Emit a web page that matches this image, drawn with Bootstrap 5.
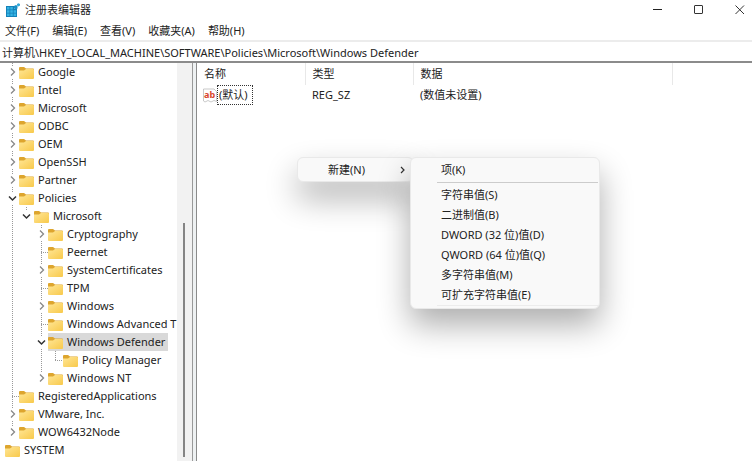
<!DOCTYPE html>
<html lang="zh-CN">
<head>
<meta charset="utf-8">
<meta name="viewport" content="width=device-width, initial-scale=1">
<title>注册表编辑器</title>
<link href="https://cdn.jsdelivr.net/npm/bootstrap@5.3.0/dist/css/bootstrap.min.css" rel="stylesheet">
<style>
body{font:11px/18px "Noto Sans","Noto Sans CJK SC",sans-serif;color:#222;background:#fff}
button{font:inherit;color:inherit}
.titlebar{height:20px;padding:0 7px 0 5px}
.titlebar h1{font:inherit;margin:0 0 0 5px}
.winbtns{gap:31px}
.winbtns button{width:10px;height:20px}
.menus{height:22px;gap:13px;padding:2px 0 0 5px;border-bottom:2px solid #ececec}
.addr{height:21px;padding:0 2px;outline:0;border-bottom:2px solid #8b8b8b !important;line-height:18px;color:#222}
.treepane{width:177px}
.tree li{height:18px}
.tree .cell{width:14px}
.tree .wide{width:15px}
.pad{width:5px}
.cell{background-repeat:no-repeat;height:18px}
.vline,.half,.tee,.elbow{background-image:repeating-linear-gradient(#999 0 1px,transparent 1px 2px),repeating-linear-gradient(90deg,#999 0 1px,transparent 1px 2px);background-position:7px 0,7px 9px}
.vline{background-size:1px 18px,0 0}
.half{background-size:1px 9px,0 0}
.tee{background-size:1px 18px,7px 1px}
.elbow{background-size:1px 9px,7px 1px}
.cell button{height:12px;width:11px;background:#fff}
.cell svg{display:block}
.node{height:18px;padding-right:3px;gap:4px}
.node.selected{background:#d9d9d9}
.scroll{width:15px;background:#f2f2f2;padding-top:160px}
.scroll i{width:2px;background:#858585;height:234px;margin-left:6px}
.split{width:5px;border-left:1px solid #999;border-right:1px solid #8b8b8b;background:#eef1f2}
.values{table-layout:fixed}
.values th{font-weight:400;height:22px;padding:0 0 0 7px;border-right:1px solid #e8e8e8}
.values th:last-child{border:0}
.values td{height:20px;padding:0 0 0 7px}
.values td:first-child{padding-left:6px}
.c1,.c2{width:108px}.c3{width:259px}
.focusbox{border:1px dotted #333;padding:0 4px 0 1px}
.popup{background:#f9f9f9;border:1px solid #e9e9e9;border-radius:6px;box-shadow:0 16px 32px rgba(0,0,0,.32)}
.popup button{text-align:left}
.pop-new{left:297px;top:157px;width:117px}
.pop-new button{height:23px;padding:0 5px 0 30px}
.pop-sub{left:410px;top:157px;width:190px}
.pop-sub button{height:20px;padding:0 30px}
.pop-sub li:first-child button{height:24px}
.pop-sub hr{margin:0 1px 2px 26px;border-top:1px solid #ccc;opacity:1}
.pop-sub .fade-rule{margin:0 1px 2px 26px;border-top:1px solid #ececec}
</style>
<script src="https://cdn.jsdelivr.net/npm/bootstrap@5.3.0/dist/js/bootstrap.bundle.min.js"></script>
</head>
<body class="vh-100 d-flex flex-column overflow-hidden position-relative">
<svg width="0" height="0" class="position-absolute" aria-hidden="true">
<linearGradient id="fg" x1="0" y1="0" x2="1" y2="1"><stop stop-color="#ffe695"/><stop offset="1" stop-color="#f8c94b"/></linearGradient>
<symbol id="folder" viewBox="0 0 15 13"><path d="M0 2Q0 1 1 1H5L7 2.500H14Q15 2.500 15 3.500V6H0z" fill="#dda52e"/><path d="M0 4.500H5L7 3H14Q15 3 15 4V12Q15 13 14 13H1Q0 13 0 12z" fill="url(#fg)"/></symbol>
<symbol id="right" viewBox="0 0 11 10"><path d="M4 1.500L7.500 5L4 8.500" fill="none" stroke="#888" stroke-width="1.300"/></symbol>
<symbol id="down" viewBox="0 0 11 10"><path d="M2 3.500L5.500 7L9 3.500" fill="none" stroke="#333" stroke-width="1.500"/></symbol>
</svg>
<header class="titlebar d-flex align-items-center flex-shrink-0">
<svg width="15" height="15" viewBox="0 0 15 15" aria-hidden="true"><path d="M1 3H9V6H12V14H1z" fill="#1581b8"/><path d="M2 4h2.500v2.500H2zM5.300 4h2.500v2.500H5.300zM2 7.300h2.500v2.500H2zM5.300 7.300h2.500v2.500H5.300zM8.600 7.300h2.500v2.500H8.600zM2 10.600h2.500V13H2zM5.300 10.600h2.500V13H5.300zM8.600 10.600h2.500V13H8.600z" fill="#35b3e3"/><path d="M9 3L11 2L12.500 3V5.500L11 6.500L9 5.500z" fill="#1a8fc6"/><path d="M12 1l1.500-.8 1.500.8v1.600l-1.500.8-1.500-.8z" fill="#35a9d8"/></svg>
<h1>注册表编辑器</h1>
<div class="winbtns d-flex ms-auto">
<button class="border-0 bg-transparent p-0 d-flex align-items-center justify-content-center" aria-label="最小化"><svg width="10" height="10"><path d="M0 4.500H9" stroke="#222"/></svg></button>
<button class="border-0 bg-transparent p-0 d-flex align-items-center justify-content-center" aria-label="最大化"><svg width="10" height="10"><rect x=".5" y=".5" width="8" height="8" rx=".5" fill="none" stroke="#333"/></svg></button>
<button class="border-0 bg-transparent p-0 d-flex align-items-center justify-content-center" aria-label="关闭"><svg width="10" height="10"><path d="M.5.5L9 9M9 .5L.5 9" stroke="#333"/></svg></button>
</div>
</header>
<nav class="menus d-flex align-items-center flex-shrink-0">
<button class="border-0 bg-transparent p-0">文件(F)</button><button class="border-0 bg-transparent p-0">编辑(E)</button><button class="border-0 bg-transparent p-0">查看(V)</button><button class="border-0 bg-transparent p-0">收藏夹(A)</button><button class="border-0 bg-transparent p-0">帮助(H)</button>
</nav>
<input class="addr w-100 border-0 flex-shrink-0" aria-label="地址" value="计算机\HKEY_LOCAL_MACHINE\SOFTWARE\Policies\Microsoft\Windows Defender">
<main class="d-flex flex-grow-1 overflow-hidden">
<nav class="treepane overflow-hidden flex-shrink-0 text-nowrap" aria-label="注册表项">
<ul class="tree list-unstyled m-0" id="tree"></ul>
</nav>
<div class="scroll flex-shrink-0"><i class="d-block"></i></div>
<div class="split flex-shrink-0"></div>
<section class="flex-grow-1">
<table class="values w-100">
<colgroup><col class="c1"><col class="c2"><col class="c3"><col></colgroup>
<thead><tr><th>名称</th><th>类型</th><th>数据</th><th></th></tr></thead>
<tbody><tr><td><span class="d-flex align-items-center"><svg width="14" height="15" viewBox="0 0 14 15" aria-hidden="true"><path d="M.5 1H11L13.500 3.500V13.500L11 12.500L8 14L5 12.500L2 14L.5 13z" fill="#fff" stroke="#bbb" stroke-width=".8"/><text x="1" y="10" font-size="9" font-weight="700" fill="#d8452c">ab</text></svg><span class="focusbox">(默认)</span></span></td><td>REG_SZ</td><td>(数值未设置)</td><td></td></tr></tbody>
</table>
</section>
</main>
<div class="popup pop-new position-absolute"><button class="border-0 bg-transparent w-100 d-flex align-items-center justify-content-between"><span>新建(N)</span><svg width="11" height="10"><path d="M4 2L7 5L4 8" fill="none" stroke="#333" stroke-width="1.200"/></svg></button></div>
<ul class="popup pop-sub position-absolute list-unstyled m-0">
<li><button class="border-0 bg-transparent w-100">项(K)</button></li>
<li><hr></li>
<li><button class="border-0 bg-transparent w-100">字符串值(S)</button></li>
<li><button class="border-0 bg-transparent w-100">二进制值(B)</button></li>
<li><button class="border-0 bg-transparent w-100">DWORD (32 位)值(D)</button></li>
<li><button class="border-0 bg-transparent w-100">QWORD (64 位)值(Q)</button></li>
<li><button class="border-0 bg-transparent w-100">多字符串值(M)</button></li>
<li><button class="border-0 bg-transparent w-100">可扩充字符串值(E)</button></li>
<li class="fade-rule"></li>
</ul>
<script>
// Guide cells per row: v = line, t = branch, e = elbow, _ = blank, > = closed, < = open, l = last closed
const rows = [
 ['>','Google'],['>','Intel'],['>','Microsoft'],['>','ODBC'],['>','OEM'],['>','OpenSSH'],['>','Partner'],
 ['<','Policies'],['v<','Microsoft',1],['v_>','Cryptography'],['v_t','Peernet'],['v_>','SystemCertificates'],
 ['v_t','TPM'],['v_>','Windows'],['v_t','Windows Advanced T'],['v_<','Windows Defender'],
 ['v_ve','Policy Manager'],['v_l','Windows NT'],['t','RegisteredApplications'],['>','VMware, Inc.'],
 ['l','WOW6432Node'],['','SYSTEM']];
const line = {v:'vline',t:'tee',e:'elbow','>':'vline','<':'vline',l:'half',_:''};
document.getElementById('tree').innerHTML = rows.map(([guides,label,last]) => {
  const cells = [...guides].map((g,i) => {
    const open = g === '<', toggle = open || g === '>' || g === 'l';
    const kind = last && open ? 'half' : line[g];
    const btn = toggle ? `<button class="border-0 p-0" aria-label="${label}" aria-expanded="${open}"><svg width="11" height="10"><use href="#${open ? 'down' : 'right'}"/></svg></button>` : '';
    return `<span class="cell flex-shrink-0 d-flex align-items-center justify-content-center ${i % 2 ? 'wide' : ''} ${kind}">${btn}</span>`;
  }).join('');
  return `<li class="d-flex align-items-center"><span class="pad flex-shrink-0"></span>${cells}<span class="node d-flex align-items-center ${label === 'Windows Defender' ? 'selected' : ''}"><svg width="15" height="13" class="flex-shrink-0"><use href="#folder"/></svg><span>${label}</span></span></li>`;
}).join('');
</script>
</body>
</html>
